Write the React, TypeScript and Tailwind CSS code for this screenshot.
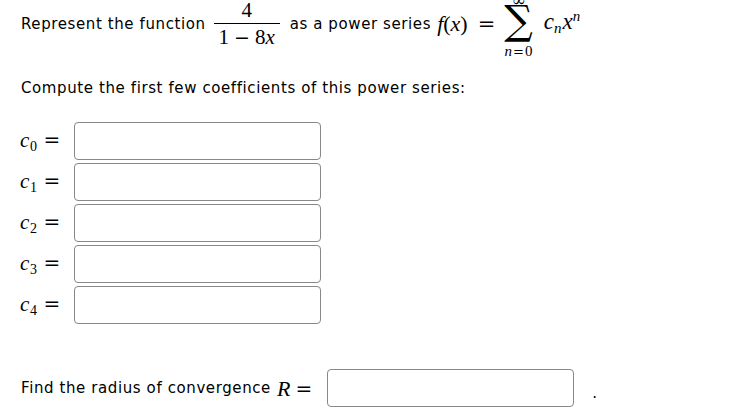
import React from "react";

const serif = "font-['Liberation_Serif','DejaVu_Serif',serif]";
const sym = "font-['DejaVu_Serif',serif] not-italic";

function Coef({ n }: { n: number }) {
    return (
        <div className="flex items-center h-[38px]">
            <div className={`w-[53px] pl-[20px] flex items-baseline text-[21px] text-black ${serif}`}>
                <span className="italic">c</span>
                <span className="text-[14px] relative top-[4px]">{n}</span>
                <span className={`ml-[6px] text-[20px] ${sym}`}>=</span>
            </div>
            <input className="ml-[21px] w-[247px] h-[38px] rounded-[4px] border border-[#888] bg-white" />
        </div>
    );
}

export default function App() {
    return (
        <div className="w-[737px] h-[420px] bg-white text-black font-['DejaVu_Sans',sans-serif] text-[15px] tracking-[0.6px] overflow-hidden">
            {/* first line */}
            <div className="flex items-center pl-[21px] h-[58px] -mt-[5px]">
                <span>Represent the function</span>
                <div className={`ml-[8px] flex flex-col items-center ${serif} text-[21px] leading-none tracking-normal`}>
                    <span className="pb-[2px]">4</span>
                    <span className="border-t border-black w-[66px]" />
                    <span className="pt-[3px] whitespace-nowrap">
                        1<span className={`mx-[5px] ${sym} text-[19px]`}>−</span>8<i>x</i>
                    </span>
                </div>
                <span className="ml-[10px]">as a power series</span>
                <span className={`ml-[6px] ${serif} text-[22px] whitespace-nowrap tracking-normal`}>
                    <i>f</i>(<i>x</i>)<span className={`ml-[10px] text-[21px] ${sym}`}>=</span>
                </span>
                {/* sum with limits */}
                <div className={`ml-[9px] self-start flex flex-col items-center ${serif} tracking-normal`}>
                    <span className={`text-[17px] h-[10px] leading-[10px] ${sym}`}>∞</span>
                    <span className={`relative -top-[4px] mt-[4px] text-[40px] h-[30px] leading-[30px] ${sym}`}>∑</span>
                    <span className="mt-[5px] h-[14px] leading-[14px] text-[15px] italic whitespace-nowrap">
                        n<span className={`mx-[1px] text-[13px] ${sym}`}>=</span><span className="not-italic">0</span>
                    </span>
                </div>
                <span className={`ml-[11px] ${serif} text-[23px] whitespace-nowrap -mt-[4px] tracking-normal`}>
                    <i>c</i><sub className="text-[15px] italic">n</sub><i className="ml-[1px]">x</i><sup className="text-[15px] italic">n</sup>
                </span>
            </div>

            <p className="pl-[21px] mt-[25px] leading-[20px]">Compute the first few coefficients of this power series:</p>

            <div className="mt-[24px] flex flex-col gap-[3px]">
                {[0, 1, 2, 3, 4].map((n) => (
                    <Coef key={n} n={n} />
                ))}
            </div>

            <div className="flex items-center pl-[21px] mt-[45px]">
                <span>Find the radius of convergence</span>
                <span className={`ml-[6px] ${serif} text-[22px] whitespace-nowrap tracking-normal`}>
                    <i>R</i><span className={`ml-[5px] text-[20px] ${sym}`}>=</span>
                </span>
                <input className="ml-[15px] w-[247px] h-[38px] rounded-[4px] border border-[#888] bg-white" />
                <span className="ml-[18px] mt-[10px]">.</span>
            </div>
        </div>
    );
}
